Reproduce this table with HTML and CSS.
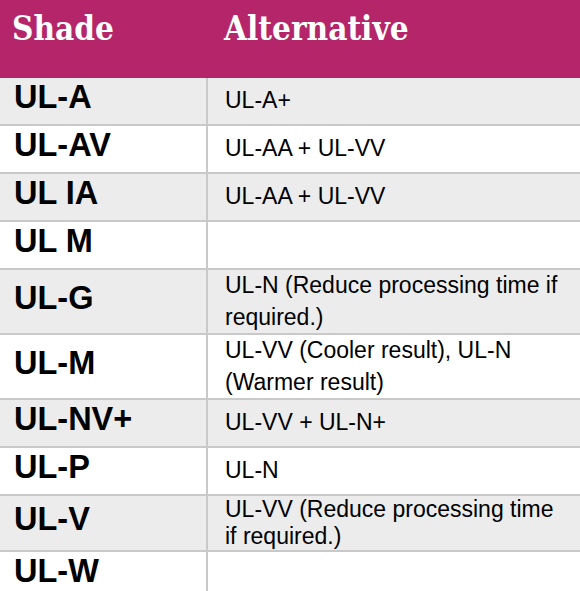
FILE: index.html
```html
<!DOCTYPE html>
<html lang="en">
<head>
<meta charset="utf-8">
<title>Shade alternatives</title>
<link rel="stylesheet" href="styles.css">
</head>
<body>
<div class="shade-table">
  <div class="head head-shade">Shade</div>
  <div class="head head-alt">Alternative</div>

  <div class="cell shade alt-bg">UL-A</div>
  <div class="cell alt alt-bg">UL-A+</div>

  <div class="cell shade">UL-AV</div>
  <div class="cell alt">UL-AA + UL-VV</div>

  <div class="cell shade alt-bg">UL IA</div>
  <div class="cell alt alt-bg">UL-AA + UL-VV</div>

  <div class="cell shade">UL M</div>
  <div class="cell alt"></div>

  <div class="cell shade alt-bg">UL-G</div>
  <div class="cell alt alt-bg">UL-N (Reduce processing time if required.)</div>

  <div class="cell shade">UL-M</div>
  <div class="cell alt">UL-VV (Cooler result), UL-N (Warmer result)</div>

  <div class="cell shade alt-bg">UL-NV+</div>
  <div class="cell alt alt-bg">UL-VV + UL-N+</div>

  <div class="cell shade">UL-P</div>
  <div class="cell alt">UL-N</div>

  <div class="cell shade alt-bg">UL-V</div>
  <div class="cell alt alt-bg tight">UL-VV (Reduce processing time if required.)</div>

  <div class="cell shade">UL-W</div>
  <div class="cell alt"></div>
</div>
</body>
</html>
```

FILE: styles.css
```css
html, body {
  margin: 0;
  padding: 0;
  background: #ffffff;
}

.shade-table {
  display: grid;
  grid-template-columns: 208px 1fr;
  width: 580px;
  font-family: "Liberation Sans", Arial, sans-serif;
  color: #000;
}

.head {
  background: #b52569;
  color: #ffffff;
  font-family: "DejaVu Serif", serif;
  font-weight: bold;
  font-stretch: condensed;
  font-size: 33px;
  line-height: 38px;
  height: 78px;
  box-sizing: border-box;
  padding-top: 10px;
}

.head-shade {
  padding-left: 12px;
}

.head-alt {
  padding-left: 16px;
}

.cell {
  box-sizing: border-box;
  min-height: 48px;
  border-bottom: 2px solid #c9c9c9;
  display: flex;
  align-items: center;
}

.shade {
  border-right: 2px solid #c9c9c9;
  font-weight: bold;
  font-size: 32.5px;
  padding: 0 0 7px 14px;
}

.alt {
  font-size: 23px;
  line-height: 31.5px;
  padding: 0 15px 0 17px;
}

.alt.tight {
  line-height: 27px;
}

.alt-bg {
  background: #ececec;
}
```
